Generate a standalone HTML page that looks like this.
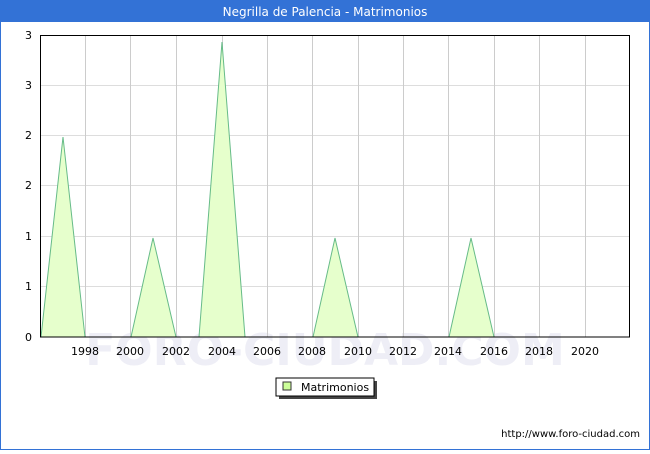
<!DOCTYPE html>
<html><head><meta charset="utf-8"><style>
html,body{margin:0;padding:0;background:#fff}
body{width:650px;height:450px;overflow:hidden;font-family:"DejaVu Sans","Liberation Sans",sans-serif}
</style></head><body>
<svg width="650" height="450" xmlns="http://www.w3.org/2000/svg" font-family="DejaVu Sans, Liberation Sans, sans-serif">
<rect x="0.5" y="0.5" width="649" height="449" fill="#fff" stroke="#3372d6"/>
<rect x="0" y="0" width="650" height="22" fill="#3372d6"/>
<text x="325" y="16" fill="#fff" font-size="12" text-anchor="middle">Negrilla de Palencia - Matrimonios</text>
<text x="325" y="365" fill="#eeeef6" font-size="44" text-anchor="middle" font-weight="bold">FORO-CIUDAD.COM</text>
<g stroke="#dddddd" stroke-width="1">
<line x1="40" y1="85.5" x2="630" y2="85.5"/><line x1="40" y1="135.5" x2="630" y2="135.5"/>
<line x1="40" y1="185.5" x2="630" y2="185.5"/><line x1="40" y1="236.5" x2="630" y2="236.5"/>
<line x1="40" y1="286.5" x2="630" y2="286.5"/>
</g>
<g stroke="#cccccc" stroke-width="1">
<line x1="85.5" y1="35" x2="85.5" y2="337"/><line x1="130.5" y1="35" x2="130.5" y2="337"/>
<line x1="176.5" y1="35" x2="176.5" y2="337"/><line x1="222.5" y1="35" x2="222.5" y2="337"/>
<line x1="267.5" y1="35" x2="267.5" y2="337"/><line x1="312.5" y1="35" x2="312.5" y2="337"/>
<line x1="358.5" y1="35" x2="358.5" y2="337"/><line x1="403.5" y1="35" x2="403.5" y2="337"/>
<line x1="448.5" y1="35" x2="448.5" y2="337"/><line x1="494.5" y1="35" x2="494.5" y2="337"/>
<line x1="539.5" y1="35" x2="539.5" y2="337"/><line x1="585.5" y1="35" x2="585.5" y2="337"/>
</g>
<g fill="#e6ffcc" stroke="#66bb88" stroke-width="1">
<polygon points="41,337 63,137 85,337"/>
<polygon points="131,337 153,238 176,337"/>
<polygon points="199,337 222,42 245,337"/>
<polygon points="313,337 335,238 358,337"/>
<polygon points="449,337 471,238 494,337"/>
</g>
<rect x="40.5" y="35.5" width="589" height="301.5" fill="none" stroke="#000"/>
<g font-size="11" fill="#000" text-anchor="end">
<text x="32" y="39">3</text><text x="32" y="89">3</text><text x="32" y="139">2</text>
<text x="32" y="189">2</text><text x="32" y="240">1</text><text x="32" y="290">1</text><text x="32" y="341">0</text>
</g>
<g font-size="11" fill="#000" text-anchor="middle">
<text x="85" y="355">1998</text><text x="130" y="355">2000</text><text x="176" y="355">2002</text>
<text x="222" y="355">2004</text><text x="267" y="355">2006</text><text x="312" y="355">2008</text>
<text x="358" y="355">2010</text><text x="403" y="355">2012</text><text x="448" y="355">2014</text>
<text x="494" y="355">2016</text><text x="539" y="355">2018</text><text x="585" y="355">2020</text>
</g>
<rect x="279" y="381" width="98" height="18" fill="#444"/>
<rect x="276" y="378" width="98" height="18" fill="#fff" stroke="#000"/>
<rect x="283" y="382" width="8" height="8" fill="#ccff99" stroke="#333"/>
<text x="301" y="391" font-size="11">Matrimonios</text>
<text x="640" y="437" font-size="10" text-anchor="end">http://www.foro-ciudad.com</text>
</svg>
</body></html>
